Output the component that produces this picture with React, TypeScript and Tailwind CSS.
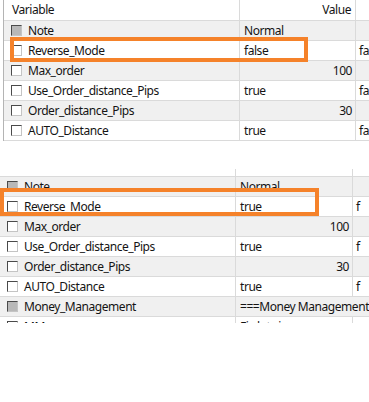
import React from 'react';

type Row = {
  name: string;
  value: string;
  extra?: string;
  numeric?: boolean;
  group?: boolean;
};

const topRows: Row[] = [
  { name: 'Note', value: 'Normal', group: true },
  { name: 'Reverse_Mode', value: 'false', extra: 'fa' },
  { name: 'Max_order', value: '100', numeric: true },
  { name: 'Use_Order_distance_Pips', value: 'true', extra: 'fa' },
  { name: 'Order_distance_Pips', value: '30', numeric: true },
  { name: 'AUTO_Distance', value: 'true', extra: 'fa' },
];

const bottomRows: Row[] = [
  { name: 'Note', value: 'Normal', group: true },
  { name: 'Reverse_Mode', value: 'true', extra: 'f' },
  { name: 'Max_order', value: '100', numeric: true },
  { name: 'Use_Order_distance_Pips', value: 'true', extra: 'f' },
  { name: 'Order_distance_Pips', value: '30', numeric: true },
  { name: 'AUTO_Distance', value: 'true', extra: 'f' },
  { name: 'Money_Management', value: '===Money Management===', group: true },
  { name: 'MM', value: 'Fix lot size' },
];

const CheckBox = ({ filled }: { filled?: boolean }) => (
  <span
    className={`inline-block w-[11px] h-[11px] shrink-0 border-t border-l border-t-[#4a4a4a] border-l-[#4a4a4a] border-b border-r border-b-[#c4c4c4] border-r-[#c4c4c4] ${
      filled ? 'bg-[#b8b8b8]' : 'bg-white'
    }`}
  />
);

const GridRow = ({ row, index, col2 }: { row: Row; index: number; col2: string }) => {
  const shaded = index % 2 === 0;
  const spans = row.group && row.value.startsWith('===');
  return (
    <div className={`flex h-[20px] border-b border-[#dadada] ${shaded ? 'bg-[#f0f0f0]' : 'bg-white'}`}>
      <div className="w-[236px] shrink-0 flex items-center border-r border-[#dadada] pl-[7px] gap-[6px] overflow-hidden whitespace-nowrap">
        <CheckBox filled={row.group} />
        <span>{row.name}</span>
      </div>
      {spans ? (
        <div className="flex-1 flex items-center pl-[4px] overflow-hidden whitespace-nowrap">{row.value}</div>
      ) : (
        <>
          <div
            className={`${col2} shrink-0 flex items-center border-r border-[#dadada] overflow-hidden whitespace-nowrap ${
              row.numeric ? 'justify-end pr-[3px]' : 'pl-[4px]'
            }`}
          >
            {row.value}
          </div>
          <div className="flex-1 flex items-center pl-[3px] overflow-hidden whitespace-nowrap">{row.extra}</div>
        </>
      )}
    </div>
  );
};

export default function App() {
  return (
    <div
      className="relative w-[369px] h-[402px] bg-white overflow-hidden text-[12px] tracking-[-0.45px] text-[#141414]"
      style={{ fontFamily: '"Noto Sans", "Open Sans", sans-serif' }}
    >
      {/* first grid */}
      <div className="pl-[3px]">
        <div className="border-l border-[#b4b4b4]">
          <div className="flex h-[21px] border-b border-[#dadada] bg-white">
            <div className="w-[236px] shrink-0 flex items-center border-r border-[#dadada] pl-[8px]">Variable</div>
            <div className="w-[116px] shrink-0 flex items-center justify-end border-r border-[#dadada] pr-[4px]">
              Value
            </div>
            <div className="flex-1" />
          </div>
          {topRows.map((r, i) => (
            <GridRow key={r.name} row={r} index={i} col2="w-[116px]" />
          ))}
        </div>
      </div>

      {/* second grid */}
      <div className="mt-[28px] h-[154px] overflow-hidden">
        <div className="flex h-[8px] border-b border-[#dadada]">
          <div className="w-[236px] shrink-0 border-r border-[#dadada]" />
          <div className="w-[117px] shrink-0 border-r border-[#dadada]" />
        </div>
        {bottomRows.map((r, i) => (
          <GridRow key={r.name + i} row={r} index={i} col2="w-[117px]" />
        ))}
      </div>

      {/* highlight boxes */}
      <div className="absolute left-[10px] top-[37px] w-[298px] h-[25px] border-[4px] border-[#f5822a]" />
      <div className="absolute left-0 top-[188px] w-[319px] h-[28px] border-[4px] border-[#f5822a]" />
    </div>
  );
}
